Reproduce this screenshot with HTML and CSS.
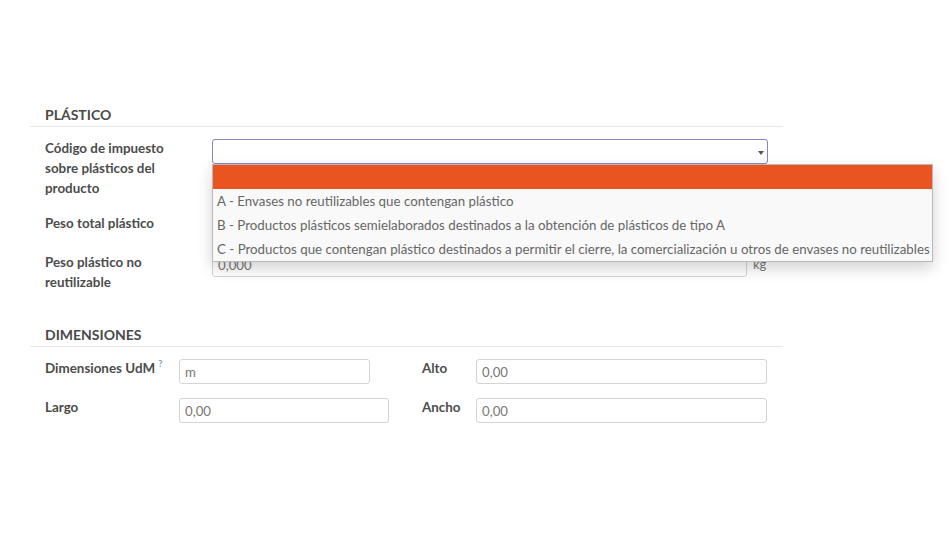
FILE: index.html
```html
<!DOCTYPE html>
<html lang="es">
<head>
    <meta charset="UTF-8">
    <title>Producto - Plástico y dimensiones</title>
    <link rel="stylesheet" href="styles.css">
</head>
<body>

<div class="sheet">

    <!-- Grupo plástico -->
    <div class="group group-plastic">
        <div class="group-title">PLÁSTICO</div>
        <div class="field-rows">
            <div class="field-row">
                <label class="field-label">Código de impuesto sobre plásticos del producto</label>
                <div class="select-wrap">
                    <div class="select focused"><span class="caret"></span></div>
                    <ul class="dropdown">
                        <li class="option selected">&nbsp;</li>
                        <li class="option">A - Envases no reutilizables que contengan plástico</li>
                        <li class="option">B - Productos plásticos semielaborados destinados a la obtención de plásticos de tipo A</li>
                        <li class="option">C - Productos que contengan plástico destinados a permitir el cierre, la comercialización u otros de envases no reutilizables</li>
                    </ul>
                </div>
            </div>
            <div class="field-row">
                <label class="field-label">Peso total plástico</label>
                <div class="with-unit">
                    <input class="input input-weight" type="text" value="0,000">
                    <span class="unit">kg</span>
                </div>
            </div>
            <div class="field-row">
                <label class="field-label">Peso plástico no reutilizable</label>
                <div class="with-unit">
                    <input class="input input-weight" type="text" value="0,000">
                    <span class="unit">kg</span>
                </div>
            </div>
        </div>
    </div>

    <!-- Grupo dimensiones -->
    <div class="group group-dims">
        <div class="group-title">DIMENSIONES</div>
        <div class="dims-grid">
            <label class="field-label">Dimensiones UdM <sup class="help">?</sup></label>
            <div><input class="input input-uom" type="text" value="m"></div>
            <label class="field-label">Alto</label>
            <div><input class="input" type="text" value="0,00"></div>

            <label class="field-label">Largo</label>
            <div><input class="input" type="text" value="0,00"></div>
            <label class="field-label">Ancho</label>
            <div><input class="input" type="text" value="0,00"></div>
        </div>
    </div>

</div>

</body>
</html>
```

FILE: styles.css
```css
/* base */
body {
    margin: 0;
    background: #fff;
    font-family: "Lato", "Open Sans", sans-serif;
    font-size: 13px;
    color: #4c4c4c;
}
.sheet {
    width: 753px;
    margin-left: 30px;
    padding-top: 105px;
}

/* grupos */
.group-title {
    padding: 0 15px 1px;
    line-height: 20px;
    font-size: 14px;
    font-weight: 700;
    color: #4a4a4a;
    border-bottom: 1px solid #e8e8e8;
}
.group-dims {
    margin-top: 33px;
}
.field-rows {
    display: flex;
    flex-direction: column;
    gap: 14px;
    padding: 11px 15px 0;
}
.field-row {
    display: grid;
    grid-template-columns: 167px 1fr;
}
.field-row:first-child {
    margin-bottom: 1px;
}
.field-label {
    font-size: 13.4px;
    font-weight: 700;
    line-height: 20px;
    color: #4c4c4c;
    padding-right: 30px;
}

/* inputs */
.input {
    box-sizing: border-box;
    width: 100%;
    height: 24px;
    margin: 1px 0 0;
    padding: 0 5px;
    border: 1px solid #d4d4d4;
    border-radius: 3px;
    font-family: inherit;
    font-size: 13.2px;
    color: #777;
    background: #fff;
    outline: none;
}
.with-unit {
    display: flex;
    align-items: flex-start;
}
.input-weight {
    width: 535px;
}
.unit {
    margin-left: 6px;
    padding-top: 4px;
    color: #777;
}

/* select + menú desplegable */
.select-wrap {
    position: relative;
}
.select {
    box-sizing: border-box;
    height: 25px;
    margin-top: 1px;
    border: 1px solid #d4d4d4;
    border-radius: 3px;
    position: relative;
}
.select.focused {
    border-color: #8784c0;
}
.caret {
    position: absolute;
    right: 3px;
    top: 11px;
    border-left: 3px solid transparent;
    border-right: 3px solid transparent;
    border-top: 4px solid #555;
}
.dropdown {
    position: absolute;
    left: 0;
    top: 26px;
    width: 721px;
    box-sizing: border-box;
    margin: 0;
    padding: 0;
    list-style: none;
    background: #f9f9f9;
    border: 1px solid #b9b9b9;
    box-shadow: 0 6px 14px rgba(0, 0, 0, 0.18);
    z-index: 10;
}
.option {
    height: 24px;
    line-height: 24px;
    padding: 0 4px;
    font-size: 13.3px;
    color: #666;
    white-space: nowrap;
}
.option.selected {
    background: #e95420;
}

/* dimensiones */
.dims-grid {
    display: grid;
    grid-template-columns: 134px 210px 33px 54px 291px;
    row-gap: 13px;
    padding: 11px 15px 0;
}
.dims-grid > :nth-child(3),
.dims-grid > :nth-child(7) {
    grid-column: 4;
}
.dims-grid > .field-label {
    padding-right: 0;
}
.dims-grid .input {
    height: 25px;
}
.dims-grid .input-uom {
    width: 191px;
}
.help {
    line-height: 0;
    vertical-align: 6px;
    color: #7d95b8;
    font-size: 9px;
    font-weight: 700;
}
```
